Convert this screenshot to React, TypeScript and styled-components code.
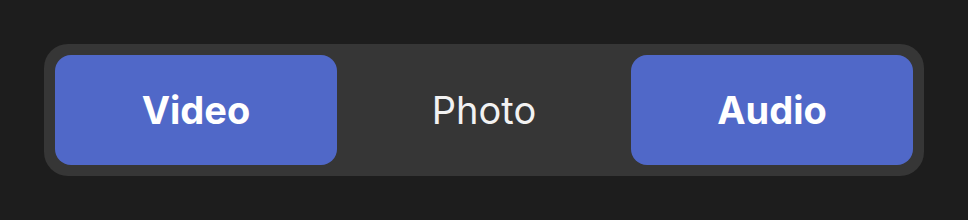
import styled, { createGlobalStyle } from 'styled-components';

type TabProps = {
  active: boolean;
};

const tabs = [
  { label: 'Video', active: true },
  { label: 'Photo', active: false },
  { label: 'Audio', active: true },
];

export default function App() {
  return (
    <>
      <GlobalStyle />
      <Page>
        <Switcher>
          {tabs.map((tab) => (
            <Tab key={tab.label} active={tab.active}>
              {tab.label}
            </Tab>
          ))}
        </Switcher>
      </Page>
    </>
  );
}

const GlobalStyle = createGlobalStyle`
  * {
    box-sizing: border-box;
  }
  body {
    margin: 0;
    background-color: #1d1d1d;
    font-family: Inter, 'Noto Sans', sans-serif;
  }
`;

const Page = styled.div`
  padding: 44px;
`;

const Switcher = styled.div`
  display: grid;
  grid-template-columns: 1fr 1fr 1fr;
  gap: 6px;
  width: 880px;
  height: 132px;
  padding: 11px;
  border-radius: 24px;
  background-color: #363636;
`;

const Tab = styled.div.withConfig({ shouldForwardProp: (prop) => prop !== 'active' })<TabProps>`
  display: flex;
  justify-content: center;
  align-items: center;
  border-radius: 16px;
  background-color: ${({ active }) => (active ? '#5068c8' : 'transparent')};
  color: ${({ active }) => (active ? '#ffffff' : '#f2f2f2')};
  font-size: 38px;
  font-weight: ${({ active }) => (active ? 700 : 400)};
`;
